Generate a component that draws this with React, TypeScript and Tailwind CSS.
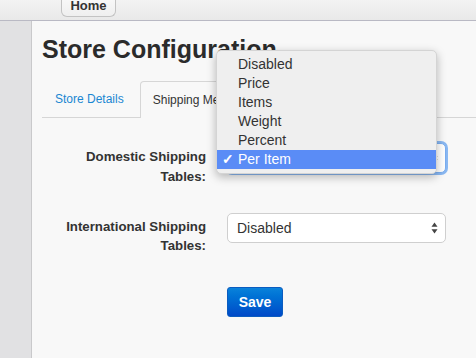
import React from "react";

const options = ["Disabled", "Price", "Items", "Weight", "Percent", "Per Item"];

function Arrows() {
  return (
    <svg width="7" height="12" viewBox="0 0 7 12" className="shrink-0">
      <path d="M3.5 0.5 L6.5 4.8 H0.5 Z" fill="#444" />
      <path d="M3.5 11.5 L6.5 7.2 H0.5 Z" fill="#444" />
    </svg>
  );
}

function Select({ value, focused }: { value: string; focused?: boolean }) {
  return (
    <div
      className={`flex h-[30px] w-[219px] items-center justify-between rounded-[5px] border bg-white pl-[9px] pr-[7px] text-[14px] text-[#333] ${
        focused
          ? "border-[#7aaef0] shadow-[0_0_0_2px_#8ab8f2]"
          : "border-[#cfcfcf]"
      }`}
    >
      <span>{value}</span>
      <Arrows />
    </div>
  );
}

export default function App() {
  return (
    <div
      className="relative flex h-[358px] w-[476px] flex-col overflow-hidden bg-[#f8f8f8] text-[#333]"
      style={{ fontFamily: '"Liberation Sans", Arial, sans-serif' }}
    >
      {/* Top bar */}
      <div className="flex h-[21px] shrink-0 items-end border-b border-[#b9b9c4] bg-gradient-to-b from-[#f3f3f3] to-[#e9e9e9] pl-[61px]">
        <div className="mb-[3px] flex h-[22px] w-[55px] items-end justify-center rounded-b-[6px] border border-t-0 border-[#c3c3c3] bg-gradient-to-b from-[#fafafa] to-[#efefef] pb-[3px] text-[13px] font-bold leading-[14px] text-[#333]">
          Home
        </div>
      </div>

      <div className="flex flex-1">
        {/* Sidebar */}
        <div className="w-[32px] shrink-0 border-r border-[#c9c9cb] bg-[#e1e1e3]" />

        {/* Main */}
        <div className="flex-1 pl-[10px] pt-[13px]">
          <h1 className="text-[25px] font-bold leading-[30px] text-[#2b2b2b]">
            Store Configuration
          </h1>

          {/* Tabs */}
          <div className="mt-[17px] flex h-[37px] items-end border-b border-[#d6d6d6]">
            <div className="flex h-[36px] items-center pl-[13px] pr-[16px] text-[12px] text-[#1a87d2]">
              Store Details
            </div>
            <div className="-mb-px flex h-[37px] items-center rounded-t-[4px] border border-b-0 border-[#d6d6d6] bg-[#f8f8f8] px-[12px] text-[12px] text-[#333]">
              Shipping Methods
            </div>
          </div>

          {/* Form */}
          <div className="pt-[25px]">
            <div className="flex gap-[21px]">
              <div className="w-[164px] pt-[4px] text-right text-[13.25px] font-bold leading-[20px] text-[#333]">
                Domestic Shipping
                <br />
                Tables:
              </div>
              <Select value="Per Item" focused />
            </div>

            <div className="mt-[26px] flex gap-[21px]">
              <div className="w-[164px] pt-[4px] text-right text-[13.25px] font-bold leading-[19px] text-[#333]">
                International Shipping
                <br />
                Tables:
              </div>
              <Select value="Disabled" />
            </div>

            <div className="mt-[32px] pl-[185px]">
              <button className="h-[30px] w-[56px] rounded-[3px] border border-[#0b5cc0] bg-gradient-to-b from-[#0b82da] to-[#0049c8] text-[14px] font-bold text-white">
                Save
              </button>
            </div>
          </div>
        </div>
      </div>

      {/* Open dropdown menu */}
      <div className="absolute left-[216px] top-[50px] z-10 w-[221px] rounded-[5px] border border-[#d4d4d4] bg-[#efefef] py-[4px] shadow-[0_3px_10px_rgba(0,0,0,0.28)]">
        {options.map((o) => {
          const sel = o === "Per Item";
          return (
            <div
              key={o}
              className={`flex h-[19px] items-center text-[14px] ${
                sel ? "bg-[#5a8cf6] text-white" : "text-[#333]"
              }`}
            >
              <span className="w-[21px] pl-[5px] text-[14px] font-bold">{sel ? "✓" : ""}</span>
              {o}
            </div>
          );
        })}
      </div>
    </div>
  );
}
